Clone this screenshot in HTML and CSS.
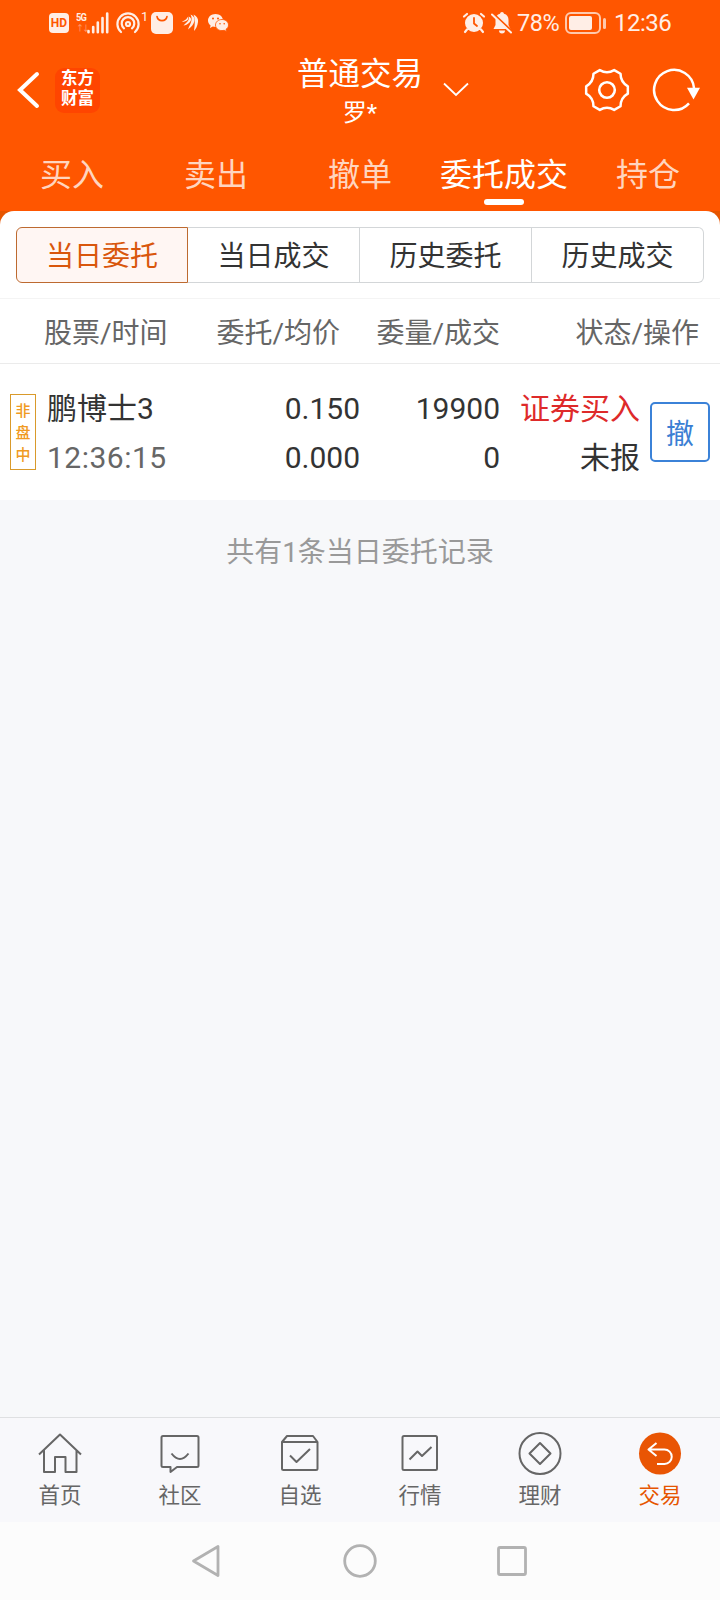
FILE: index.html
```html
<!DOCTYPE html>
<html lang="zh-CN">
<head>
    <meta charset="UTF-8">
    <meta name="viewport" content="width=device-width, initial-scale=1.0">
    <title>普通交易</title>
    <link rel="stylesheet" href="styles.css">
</head>
<body>
<div class="app">
    <header class="header">
        <div class="status-bar">
            <div class="status-left">
                <span class="hd">HD</span>
                <span class="network"><b>5G</b><i>↑↓</i></span>
                <svg class="signal" width="22" height="22" viewBox="0 0 22 22" stroke="#ffeee6" stroke-width="2.6" stroke-linecap="round">
                    <path d="M1.5 19v1.2M6.2 15v5.2M10.8 10.5v9.7M15.5 6v14.2M20.2 1.5v18.7"/>
                </svg>
                <svg class="hotspot" width="24" height="22" viewBox="0 0 24 22" fill="none" stroke="#ffeee6" stroke-width="2.2" stroke-linecap="round">
                    <path d="M5 20A10.6 10.6 0 1 1 19 20M8 16.3A6.3 6.3 0 1 1 16 16.3"/>
                    <circle cx="12" cy="12" r="2"/>
                </svg>
                <span class="hotspot-count">1</span>
                <svg class="bag" width="22" height="22" viewBox="0 0 22 22">
                    <rect width="22" height="22" rx="5" fill="#ffeee6"/>
                    <path d="M6 4.5C7 10 15 10 16 4.5" fill="none" stroke="#ff5600" stroke-width="1.6" stroke-linecap="round"/>
                </svg>
                <svg class="leaf" width="17" height="18" viewBox="0 0 17 18" fill="#ffeee6">
                    <path d="M11.500.5C15 2 16.500 5 16 8 15.500 12 14 15 12 17 12.800 11 13.500 6 11.500.5Z"/>
                    <path d="M8.500.5C12.500 2 13.500 5.500 11.500 9.500 10 12.500 8 14 6 15.500 7.500 11 11.500 6 8.500.5Z"/>
                    <path d="M6.500 2.500C9.500 3.500 10 6 7.500 8.500 5.500 10.500 3.500 11.200 1.500 11.500 4 9 8 6.500 6.500 2.500Z"/>
                    <path d="M5.500 3C7 4.500 6 6 4 7 2.500 7.800 1 7.800 0 7.500 2.500 6.500 5 5.500 5.500 3Z"/>
                </svg>
                <svg class="wechat" width="21" height="18" viewBox="0 0 21 18">
                    <path fill="#ffeee6" d="M7.500 0C3.300 0 0 2.800 0 6.400c0 2 1 3.800 2.600 5L2 14l2.800-1.500 2.700.4c4 0 7.500-2.900 7.500-6.500S11.700 0 7.500 0Z"/>
                    <path fill="#ffeee6" stroke="#ff5600" stroke-width=".8" d="M14 5.500c-3.700 0-6.500 2.400-6.500 5.500s2.800 5.600 6.500 5.600l2.200-.3 2.300 1.200-.5-2.200c1.500-1 2.500-2.500 2.500-4.300 0-3.100-2.900-5.500-6.500-5.500Z"/>
                    <g fill="#ff5600"><circle cx="5" cy="4.500" r="1"/><circle cx="10" cy="4.500" r="1"/><circle cx="12" cy="9.800" r=".8"/><circle cx="16.200" cy="9.800" r=".8"/></g>
                </svg>
            </div>
            <div class="status-right">
                <svg class="alarm" width="24" height="22" viewBox="0 0 24 22" stroke="#ffeee6" stroke-width="2.200" stroke-linecap="round">
                    <circle cx="12" cy="11" r="9" fill="#ffeee6" stroke="none"/>
                    <path d="M2 4.500 5 2M22 4.500 19 2M5 17.500 3 20M19 17.500l2 2.500"/>
                    <path d="M12 6v5.500l3 2.500" stroke="#ff5600" stroke-width="1.800" fill="none"/>
                </svg>
                <svg class="bell" width="22" height="22" viewBox="0 0 22 22">
                    <path fill="#ffeee6" d="M11 0a2 2 0 0 1 2 1.700c3 .8 4.500 3 4.500 6.300v5l2 4H2.500l2-4V8C4.500 4.700 6 2.500 9 1.700A2 2 0 0 1 11 0ZM8 18.500h6a3 3 0 0 1-6 0Z"/>
                    <path d="M2 1.500 22 20.500" stroke="#ff5600" stroke-width="2.400"/>
                    <path d="M1 2.500 20 20.500" stroke="#ffeee6" stroke-width="2" stroke-linecap="round"/>
                </svg>
                <span class="percent">78%</span>
                <svg class="battery" width="42" height="22" viewBox="0 0 42 22">
                    <rect x="1" y="1" width="34" height="20" rx="5" fill="none" stroke="#ffc9ad" stroke-width="2"/>
                    <rect x="4" y="4" width="23" height="14" rx="2" fill="#ffeee6"/>
                    <rect x="38" y="6" width="3" height="11" rx="1.500" fill="#ffc9ad"/>
                </svg>
                <span class="clock">12:36</span>
            </div>
        </div>

        <div class="title-bar">
            <div class="title-left">
                <svg width="24" height="38" viewBox="0 0 24 38" fill="none" stroke="#fff" stroke-width="4" stroke-linecap="round">
                    <path d="M21 3 4 19 21 35"/>
                </svg>
                <div class="logo">东方<br>财富</div>
            </div>
            <div class="title">
                <h1>普通交易</h1>
                <p>罗*</p>
            </div>
            <svg class="chevron" width="26" height="16" viewBox="0 0 26 16" fill="none" stroke="#fff" stroke-width="1.800">
                <path d="M1 1.500 13 13 25 1.500"/>
            </svg>
            <div class="title-right">
                <svg width="46" height="46" viewBox="-23 -23 46 46" fill="none" stroke="#fff" stroke-width="2.600" stroke-linejoin="round">
                    <path transform="scale(.96)" d="M21.700-3.800V3.800Q14.100 8.200 14.100 16.900L7.500 20.700Q0 16.300-7.500 20.700L-14.100 16.900Q-14.100 8.200-21.700 3.800V-3.800Q-14.100-8.200-14.100-16.900L-7.500-20.700Q0-16.300 7.500-20.700L14.100-16.900Q14.100-8.200 21.700-3.800Z"/>
                    <circle r="7.800"/>
                </svg>
                <svg width="50" height="46" viewBox="-23 -23 50 46">
                    <path d="M20-2A20 20 0 1 0 15 13.300" fill="none" stroke="#fff" stroke-width="2.500"/>
                    <path d="M13-2.300H26L19.500 9.500Z" fill="#fff"/>
                </svg>
            </div>
        </div>

        <nav class="tabs">
            <a>买入</a>
            <a>卖出</a>
            <a>撤单</a>
            <a class="active">委托成交</a>
            <a>持仓</a>
        </nav>
    </header>

    <main class="content">
        <section class="panel">
            <div class="segments">
                <button class="active">当日委托</button>
                <button>当日成交</button>
                <button>历史委托</button>
                <button>历史成交</button>
            </div>
            <div class="list-head">
                <span>股票/时间</span>
                <span>委托/均价</span>
                <span>委量/成交</span>
                <span>状态/操作</span>
            </div>
            <div class="order">
                <div class="badge">非<br>盘<br>中</div>
                <div class="cell stock">鹏博士3<br><span class="time">12:36:15</span></div>
                <div class="cell price">0.150<br>0.000</div>
                <div class="cell amount">19900<br>0</div>
                <div class="cell state"><span class="buy">证券买入</span><br>未报</div>
                <button class="cancel">撤</button>
            </div>
        </section>
        <p class="summary">共有1条当日委托记录</p>
    </main>

    <nav class="bottom-nav">
        <a>
            <svg width="44" height="44" viewBox="0 0 44 44"><path d="M1 22.500 22 2.500 43 22.500M6 18V40H17V25H27.500V40H38.500V18"/></svg>
            首页
        </a>
        <a>
            <svg width="44" height="44" viewBox="0 0 44 44"><path d="M5 4H39a1.500 1.500 0 0 1 1.500 1.500V33.500A1.500 1.500 0 0 1 39 35H19L12.500 40V35H5A1.500 1.500 0 0 1 3.500 33.500V5.500A1.500 1.500 0 0 1 5 4ZM13.500 21.500Q22 32.500 30.500 21.500"/></svg>
            社区
        </a>
        <a>
            <svg width="44" height="44" viewBox="0 0 44 44"><path d="M4 10 9 4H35L39.500 10V36.500A1.500 1.500 0 0 1 38 38H5.500A1.500 1.500 0 0 1 4 36.500ZM4 10H39.500M12 23.500 18.500 30 32 17"/></svg>
            自选
        </a>
        <a>
            <svg width="44" height="44" viewBox="0 0 44 44"><rect x="4.500" y="4" width="34.500" height="34" rx="1.500"/><path d="M11.500 27.500 19.500 19.500 24 24 33.500 15"/></svg>
            行情
        </a>
        <a>
            <svg width="44" height="44" viewBox="0 0 44 44"><circle cx="22" cy="21.500" r="20.500"/><path d="M22 11 32.500 21.500 22 32 11.500 21.500Z"/></svg>
            理财
        </a>
        <a class="active">
            <svg width="44" height="44" viewBox="0 0 44 44"><circle cx="22" cy="21.500" r="21"/><path d="M18.500 11 10.500 17.500 18.500 24M10.500 17.500H26.500a7.200 7.200 0 0 1 0 14.500H19"/></svg>
            交易
        </a>
    </nav>

    <div class="system-nav">
        <svg width="30" height="34" viewBox="0 0 30 34"><path d="M27 2.500V31.500L2.500 17Z"/></svg>
        <svg width="34" height="34" viewBox="0 0 34 34"><circle cx="17" cy="17" r="15.300"/></svg>
        <svg class="recent" width="30" height="30" viewBox="0 0 30 30"><rect x="1.500" y="1.500" width="27" height="27" rx="1.500"/></svg>
    </div>
</div>
</body>
</html>
```

FILE: styles.css
```css
* {
    box-sizing: border-box;
}
body {
    margin: 0;
    font-family: Roboto, "Noto Sans CJK SC", sans-serif;
    color: #333;
    background-color: #f7f8fa;
}
h1, p {
    margin: 0;
    font-weight: 400;
}
svg {
    display: block;
    flex: none;
}
button {
    font-family: inherit;
    padding: 0;
    background-color: white;
}
.app {
    display: flex;
    flex-direction: column;
    width: 720px;
    height: 1600px;
}

/* header */
.header {
    height: 211px;
    background-color: #ff5600;
    color: white;
}
.status-bar {
    display: flex;
    justify-content: space-between;
    height: 46px;
    padding: 0 49px;
    color: #ffeee6;
}
.status-left, .status-right {
    display: flex;
    align-items: center;
}
.hd {
    width: 20px;
    height: 20px;
    border-radius: 4px;
    background-color: #ffeee6;
    color: #ff5600;
    font-size: 12px;
    font-weight: 700;
    line-height: 20px;
    text-align: center;
}
.network {
    display: flex;
    flex-direction: column;
    width: 11px;
    margin-left: 7px;
    line-height: 11px;
}
.network b {
    font-size: 11px;
    letter-spacing: -1px;
    transform: scaleX(.85);
    transform-origin: left;
}
.network i {
    font-size: 8px;
    font-style: normal;
    letter-spacing: -2px;
    opacity: .5;
}
.hotspot {
    margin-left: 7px;
}
.hotspot-count {
    width: 11px;
    padding-left: 1px;
    font-size: 13px;
    line-height: 13px;
    margin-top: -14px;
}
.leaf {
    margin-left: 9px;
}
.wechat {
    margin-left: 9px;
}
.bell {
    margin-left: 5px;
}
.percent {
    width: 47px;
    margin-left: 4px;
    font-size: 23.500px;
    letter-spacing: -.5px;
}
.battery {
    margin-left: 1px;
}
.clock {
    width: 57px;
    margin-left: 7px;
    font-size: 24px;
    letter-spacing: -.5px;
}
.title-bar {
    position: relative;
    display: flex;
    justify-content: space-between;
    height: 90px;
    padding: 0 19px 0 16px;
}
.title-left, .title-right {
    display: flex;
    align-items: center;
    height: 88px;
}
.logo {
    width: 45px;
    height: 45px;
    margin-left: 15px;
    padding-top: 1px;
    border-radius: 9px;
    background-color: #ff4500;
    font-size: 16.500px;
    font-weight: 700;
    line-height: 20px;
    text-align: center;
}
.title {
    position: absolute;
    left: 0;
    right: 0;
    top: 10px;
    text-align: center;
}
.title h1 {
    font-size: 31.500px;
    line-height: 38px;
}
.title p {
    font-size: 24px;
    line-height: 39px;
}
.chevron {
    position: absolute;
    left: 443px;
    top: 36px;
}
.title-right {
    gap: 21px;
    height: 87px;
}
.tabs {
    display: flex;
    height: 75px;
}
.tabs a {
    position: relative;
    flex: 1;
    font-size: 32px;
    line-height: 78px;
    text-align: center;
    white-space: nowrap;
    color: #ffd5bf;
}
.tabs .active {
    color: white;
}
.tabs .active::after {
    content: "";
    position: absolute;
    left: 52px;
    bottom: 6px;
    width: 40px;
    height: 6px;
    border-radius: 3px;
    background-color: white;
}

/* orders */
.content {
    flex: 1;
    background: linear-gradient(#e65500 14px, #f7f8fa 14px);
}
.panel {
    background-color: white;
    border-radius: 14px 14px 0 0;
}
.segments {
    display: flex;
    padding: 16px 16px 15px;
}
.segments button {
    width: 172px;
    height: 56px;
    padding-top: 3px;
    border: 1px solid #d3d6d8;
    border-left-width: 0;
    font-size: 28px;
    line-height: 51px;
    color: #333;
}
.segments .active {
    border: 1px solid #bd6a30;
    border-radius: 6px 0 0 6px;
    background-color: #fff6f3;
    color: #d9560c;
}
.segments button:last-child {
    border-radius: 0 6px 6px 0;
}
.list-head {
    display: grid;
    grid-template-columns: 134px 162px 160px 199px;
    height: 66px;
    padding-left: 44px;
    border-top: 1px solid #f4f4f4;
    border-bottom: 1px solid #ebebeb;
    font-size: 28px;
    line-height: 69px;
    text-align: right;
    color: #666;
}
.list-head span:first-child {
    text-align: left;
}
.order {
    display: flex;
    align-items: center;
    height: 136px;
    padding-left: 10px;
}
.badge {
    width: 26px;
    height: 76px;
    padding-top: 5px;
    border: 1px solid #d99a2b;
    font-size: 15px;
    font-weight: 500;
    line-height: 22px;
    text-align: center;
    color: #f09a22;
}
.cell {
    padding-top: 2px;
    font-size: 30px;
    line-height: 49px;
    text-align: right;
    white-space: nowrap;
}
.stock {
    width: 139px;
    margin-left: 11px;
    text-align: left;
}
.time {
    letter-spacing: .5px;
    color: #666;
}
.price {
    width: 174px;
}
.amount {
    width: 140px;
}
.state {
    width: 140px;
}
.buy {
    color: #de2a2a;
}
.cancel {
    width: 60px;
    height: 60px;
    margin-left: 10px;
    border: 2px solid #3b82d8;
    border-radius: 5px;
    font-size: 28px;
    color: #3b7fd4;
}
.summary {
    padding-top: 32px;
    font-size: 28px;
    line-height: 42px;
    text-align: center;
    color: #999;
}

/* bottom */
.bottom-nav {
    display: flex;
    height: 105px;
    padding-top: 14px;
    border-top: 1px solid #dfe0e2;
    background-color: #f8f8fb;
}
.bottom-nav a {
    flex: 1;
    display: flex;
    flex-direction: column;
    align-items: center;
    font-size: 21.500px;
    line-height: 40px;
    color: #666;
}
.bottom-nav svg {
    fill: none;
    stroke: #666;
    stroke-width: 2;
    stroke-linejoin: round;
}
.bottom-nav .active {
    color: #e65500;
}
.bottom-nav .active svg {
    stroke: white;
}
.bottom-nav .active circle {
    fill: #e95504;
    stroke: none;
}
.system-nav {
    display: flex;
    align-items: center;
    height: 78px;
    padding-left: 191px;
    gap: 122px;
    background-color: #fcfcfc;
}
.system-nav svg {
    fill: none;
    stroke: #b2b2b2;
    stroke-width: 2.800;
    stroke-linejoin: round;
}
.system-nav .recent {
    margin-left: -2px;
}
```
